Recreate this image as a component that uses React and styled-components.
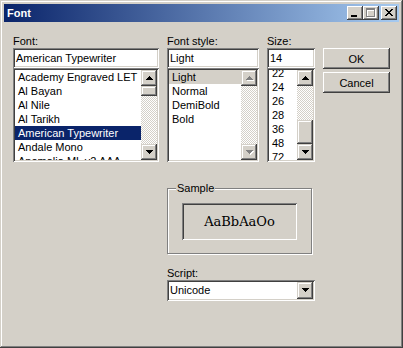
import React from 'react';
import styled, { createGlobalStyle, css } from 'styled-components';

const face = '#d4d0c8';

const GlobalStyle = createGlobalStyle`
  html, body {
    margin: 0;
    padding: 0;
    background: ${face};
  }
  body {
    font-family: 'Liberation Sans', Arial, sans-serif;
    font-size: 11px;
    color: #000;
  }
  * {
    box-sizing: border-box;
  }
`;

const raised = css`
  box-shadow: inset -1px -1px #404040, inset 1px 1px #fff, inset -2px -2px #808080,
    inset 2px 2px ${face};
`;

const scrollRaised = css`
  box-shadow: inset -1px -1px #404040, inset 1px 1px ${face}, inset -2px -2px #808080,
    inset 2px 2px #fff;
`;

const sunken = css`
  box-shadow: inset 1px 1px #808080, inset -1px -1px #fff, inset 2px 2px #404040,
    inset -2px -2px ${face};
`;

const fontItems = [
  'Academy Engraved LET',
  'Al Bayan',
  'Al Nile',
  'Al Tarikh',
  'American Typewriter',
  'Andale Mono',
  'Anomalia ML v2 AAA',
];
const styleItems = ['Light', 'Normal', 'DemiBold', 'Bold'];
const sizeItems = ['22', '24', '26', '28', '36', '48', '72'];

function ArrowGlyph({ dir, disabled }) {
  const up = 'M3 0h1v1H3zM2 1h3v1H2zM1 2h5v1H1zM0 3h7v1H0z';
  const down = 'M0 0h7v1H0zM1 1h5v1H1zM2 2h3v1H2zM3 3h1v1H3z';
  const d = dir === 'up' ? up : down;
  return (
    <svg width="8" height="5" viewBox="0 0 8 5">
      {disabled && <path d={d} fill="#fff" transform="translate(1 1)" />}
      <path d={d} fill={disabled ? '#808080' : '#000'} />
    </svg>
  );
}

function ScrollBar({ disabled, thumbOffset, thumbSize }) {
  return (
    <Scroll>
      <Arrow>
        <ArrowGlyph dir="up" disabled={disabled} />
      </Arrow>
      <Track>{!disabled && <Thumb $offset={thumbOffset} $size={thumbSize} />}</Track>
      <Arrow>
        <ArrowGlyph dir="down" disabled={disabled} />
      </Arrow>
    </Scroll>
  );
}

function App() {
  return (
    <>
      <GlobalStyle />
      <Window>
        <TitleBar>
          <Title>Font</Title>
          <Controls>
            <CaptionButton>
              <svg width="16" height="14" viewBox="0 0 16 14">
                <rect x="4" y="9" width="6" height="2" fill="#000" />
              </svg>
            </CaptionButton>
            <CaptionButton>
              <svg width="16" height="14" viewBox="0 0 16 14">
                <path d="M4 3h9v9H4zM5 5v6h7V5z" fill="#fff" fillRule="evenodd" />
                <path d="M3 2h9v9H3zM4 4v6h7V4z" fill="#808080" fillRule="evenodd" />
              </svg>
            </CaptionButton>
            <CaptionButton $gap>
              <svg width="16" height="14" viewBox="0 0 16 14">
                <path
                  transform="translate(4 3)"
                  fill="#000"
                  d="M0 0h2v1H0zM6 0h2v1H6zM1 1h2v1H1zM5 1h2v1H5zM2 2h4v1H2zM3 3h2v1H3zM2 4h4v1H2zM1 5h2v1H1zM5 5h2v1H5zM0 6h2v1H0zM6 6h2v1H6z"
                />
              </svg>
            </CaptionButton>
          </Controls>
        </TitleBar>

        <Body>
          <Field>
            <Label>Font:</Label>
            <Edit>American Typewriter</Edit>
            <ListBox>
              <Items>
                {fontItems.map((f) => (
                  <Item key={f} $state={f === 'American Typewriter' ? 'focus' : null}>
                    {f}
                  </Item>
                ))}
              </Items>
              <ScrollBar thumbOffset={0} thumbSize={10} />
            </ListBox>
          </Field>

          <Field>
            <Label>Font style:</Label>
            <Edit>Light</Edit>
            <ListBox>
              <Items>
                {styleItems.map((s) => (
                  <Item key={s} $state={s === 'Light' ? 'blur' : null}>
                    {s}
                  </Item>
                ))}
              </Items>
              <ScrollBar disabled />
            </ListBox>
          </Field>

          <Field>
            <Label>Size:</Label>
            <Edit>14</Edit>
            <ListBox>
              <Items>
                <ScrolledRows style={{ marginTop: -4 }}>
                  {sizeItems.map((s) => (
                    <Item key={s}>{s}</Item>
                  ))}
                </ScrolledRows>
              </Items>
              <ScrollBar thumbOffset={34} thumbSize={24} />
            </ListBox>
          </Field>

          <ButtonColumn>
            <PushButton>OK</PushButton>
            <PushButton>Cancel</PushButton>
          </ButtonColumn>

          <Lower>
            <GroupBox>
              <Legend>Sample</Legend>
              <SampleBox>AaBbAaOo</SampleBox>
            </GroupBox>
            <ScriptLabel>Script:</ScriptLabel>
            <Combo>
              <ComboText>Unicode</ComboText>
              <DropButton>
                <ArrowGlyph dir="down" />
              </DropButton>
            </Combo>
          </Lower>
        </Body>
      </Window>
    </>
  );
}

export default App;

const Window = styled.div`
  width: 403px;
  height: 348px;
  background: ${face};
  padding: 4px;
  display: flex;
  flex-direction: column;
  box-shadow: inset -1px -1px #404040, inset 1px 1px ${face}, inset -2px -2px #808080,
    inset 2px 2px #fff;
`;

const TitleBar = styled.div`
  height: 18px;
  flex: none;
  display: flex;
  align-items: center;
  justify-content: space-between;
  padding: 0 2px 0 3px;
  background: linear-gradient(to right, #0a246a, #a6caf0);
`;

const Title = styled.span`
  color: #fff;
  font-weight: bold;
  font-size: 11px;
  line-height: 13px;
`;

const Controls = styled.div`
  display: flex;
`;

const CaptionButton = styled.div`
  width: 16px;
  height: 14px;
  background: ${face};
  margin-left: ${(p) => (p.$gap ? 2 : 0)}px;
  ${raised}

  svg {
    display: block;
  }
`;

const Body = styled.div`
  display: grid;
  grid-template-columns: 146px 92px 48px 67px;
  column-gap: 8px;
  align-content: start;
  padding: 13px 0 0 9px;
`;

const Field = styled.div`
  display: flex;
  flex-direction: column;
`;

const Label = styled.div`
  height: 13px;
  line-height: 13px;
  white-space: nowrap;
`;

const Edit = styled.div`
  height: 20px;
  background: #fff;
  padding: 2px 2px 2px 3px;
  line-height: 16px;
  white-space: nowrap;
  overflow: hidden;
  ${sunken}
`;

const ListBox = styled.div`
  height: 94px;
  background: #fff;
  padding: 2px;
  display: flex;
  ${sunken}
`;

const Items = styled.div`
  flex: 1;
  min-width: 0;
  overflow: hidden;
`;

const ScrolledRows = styled.div``;

const Item = styled.div`
  height: 14px;
  line-height: 14px;
  padding-left: 3px;
  white-space: nowrap;
  background: ${(p) => (p.$state === 'focus' ? '#0a246a' : p.$state === 'blur' ? face : 'transparent')};
  color: ${(p) => (p.$state === 'focus' ? '#fff' : '#000')};
`;

const Scroll = styled.div`
  width: 16px;
  flex: none;
  display: flex;
  flex-direction: column;
`;

const Arrow = styled.div`
  height: 16px;
  flex: none;
  background: ${face};
  display: flex;
  align-items: center;
  justify-content: center;
  ${scrollRaised}

  svg {
    display: block;
    margin-left: 1px;
  }
`;

const Track = styled.div`
  flex: 1;
  display: flex;
  flex-direction: column;
  background: repeating-conic-gradient(${face} 0% 25%, #fff 0% 50%) 0 0 / 2px 2px;
`;

const Thumb = styled.div`
  height: ${(p) => p.$size}px;
  margin-top: ${(p) => p.$offset}px;
  flex: none;
  background: ${face};
  ${scrollRaised}
`;

const ButtonColumn = styled.div`
  display: flex;
  flex-direction: column;
  gap: 3px;
  padding-top: 13px;
`;

const PushButton = styled.button`
  width: 67px;
  height: 21px;
  border: 0;
  padding: 0;
  background: ${face};
  font-family: 'Liberation Sans', Arial, sans-serif;
  font-size: 11px;
  color: #000;
  ${raised}
`;

const Lower = styled.div`
  grid-column: 2 / 4;
  padding-top: 20px;
  display: flex;
  flex-direction: column;
`;

const GroupBox = styled.fieldset`
  margin: 0;
  width: 145px;
  min-inline-size: 0;
  padding: 0;
  border: 1px solid #808080;
  box-shadow: inset 1px 1px #fff, 1px 1px #fff;
`;

const Legend = styled.legend`
  margin-left: 8px;
  padding: 0 1px;
  line-height: 13px;
  background: ${face};
`;

const SampleBox = styled.div`
  width: 115px;
  height: 37px;
  margin: 8px 14px 13px 14px;
  display: flex;
  align-items: center;
  justify-content: center;
  font-family: 'DejaVu Serif', 'Liberation Serif', serif;
  font-size: 13px;
  box-shadow: inset 1px 1px #808080, inset -1px -1px #fff, inset 2px 2px #404040;
`;

const ScriptLabel = styled(Label)`
  margin-top: 13px;
`;

const Combo = styled.div`
  height: 21px;
  background: #fff;
  padding: 2px;
  display: flex;
  align-items: stretch;
  ${sunken}
`;

const ComboText = styled.span`
  flex: 1;
  padding-left: 1px;
  line-height: 17px;
`;

const DropButton = styled.div`
  width: 16px;
  background: ${face};
  display: flex;
  align-items: center;
  justify-content: center;
  ${scrollRaised}

  svg {
    display: block;
    margin-left: 1px;
  }
`;
